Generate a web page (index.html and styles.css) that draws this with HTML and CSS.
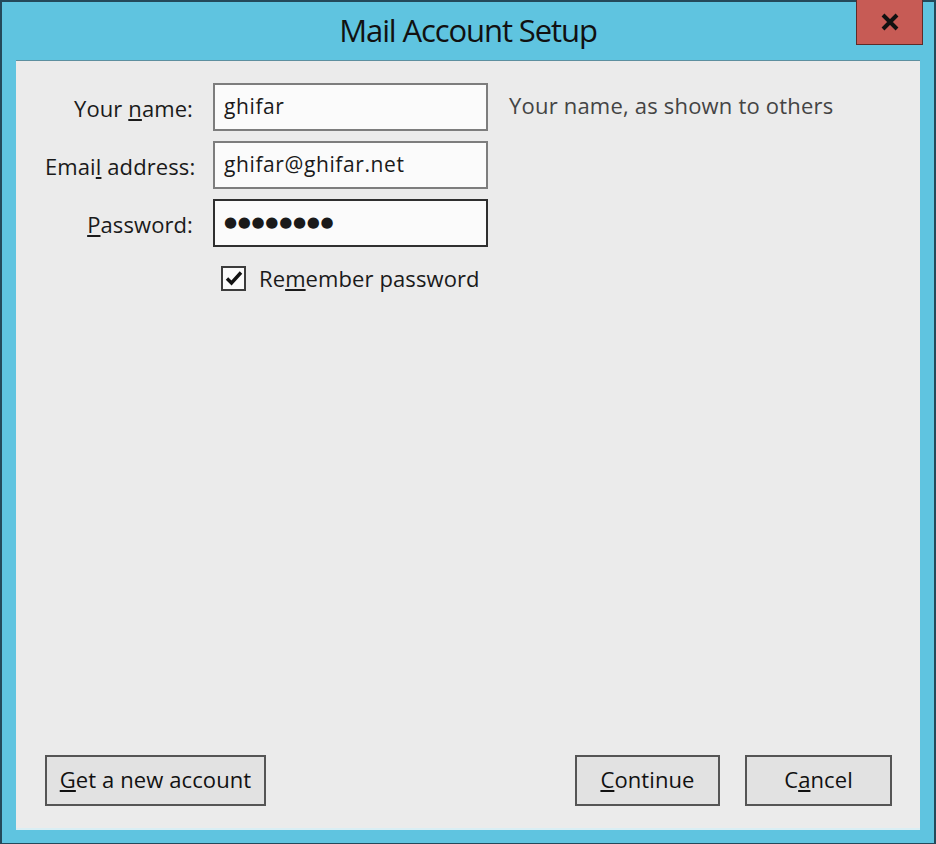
FILE: index.html
```html
<!DOCTYPE html>
<html>
<head>
<meta charset="utf-8">
<link rel="stylesheet" href="styles.css">
</head>
<body>
<div class="window">
  <div class="titlebar">
    <div class="title">Mail Account Setup</div>
    <div class="close">
      <svg width="20" height="18" viewBox="0 0 20 18"><path d="M3 2 L17 16 M17 2 L3 16" stroke="#111" stroke-width="4" stroke-linecap="butt"/></svg>
    </div>
  </div>
  <div class="panel">
    <div class="form">
      <label class="lbl">Your <u>n</u>ame:</label>
      <div class="input">ghifar</div>
      <div class="hint">Your name, as shown to others</div>

      <label class="lbl">Emai<u>l</u> address:</label>
      <div class="input">ghifar@ghifar.net</div>
      <div></div>

      <label class="lbl"><u>P</u>assword:</label>
      <div class="input focused"><span class="dots">●●●●●●●●</span></div>
      <div></div>

      <div></div>
      <div class="remember">
        <span class="check">
          <svg width="18" height="16" viewBox="0 0 18 16"><path d="M2 8.5 L6.5 13 L16 2.5" fill="none" stroke="#111" stroke-width="3.4"/></svg>
        </span>
        <span>Re<u>m</u>ember password</span>
      </div>
      <div></div>
    </div>
    <div class="buttons">
      <button class="btn wide"><u>G</u>et a new account</button>
      <div class="spacer"></div>
      <button class="btn cont"><u>C</u>ontinue</button>
      <button class="btn cancel">C<u>a</u>ncel</button>
    </div>
  </div>
</div>
</body>
</html>
```

FILE: styles.css
```css
* { box-sizing: border-box; }
html, body { margin: 0; padding: 0; }
body {
  width: 936px;
  height: 844px;
  font-family: "Open Sans", "Noto Sans", sans-serif;
  color: #1a1a1a;
}
.window {
  position: relative;
  width: 936px;
  height: 844px;
  background: #5fc4e0;
  border: 2px solid #24495a;
  border-bottom-width: 1px;
  display: flex;
  flex-direction: column;
}
.titlebar {
  height: 58px;
  display: flex;
  align-items: center;
  justify-content: center;
  padding-bottom: 2px;
}
.title {
  font-size: 31px;
  letter-spacing: -1.1px;
  color: #111;
  font-stretch: 88%;
}
.close {
  position: absolute;
  top: -2px;
  right: 11px;
  width: 67px;
  height: 45px;
  background: #c75b55;
  border: 1px solid #5e2b28;
  border-top: none;
  display: flex;
  align-items: center;
  justify-content: center;
}
.panel {
  flex: 1;
  margin: 0 14px 13px 14px;
  background: #ebebeb;
  border-top: 1px solid #5d8f9f;
  border-bottom: 2px solid #d9eef4;
  display: flex;
  flex-direction: column;
  justify-content: space-between;
  padding: 22px 28px 22px 29px;
}
.form {
  display: grid;
  grid-template-columns: 148px 275px auto;
  grid-auto-rows: 48px;
  column-gap: 20px;
  row-gap: 10px;
  margin-left: -29px;
  padding-left: 29px;
}
.lbl {
  font-size: 22px;
  text-align: right;
  align-self: center;
  white-space: nowrap;
  margin-top: 2px;
  letter-spacing: 0.1px;
}
.input {
  background: #fbfbfb;
  border: 2px solid #7d7d7d;
  font-size: 21px;
  padding: 0 0 0 9px;
  display: flex;
  align-items: center;
  letter-spacing: 0.6px;
  padding-bottom: 2px;
}
.input.focused { border-color: #2f2f2f; padding-bottom: 2px; }
.dots { font-size: 15px; letter-spacing: 0.7px; font-family: "DejaVu Sans", sans-serif; }
.hint {
  font-size: 22px;
  color: #444;
  padding-left: 1px;
  margin-top: 7px;
  white-space: nowrap;
  letter-spacing: 0.2px;
}
.remember {
  grid-column: 2 / 4;
  display: flex;
  align-items: center;
  font-size: 22px;
  margin-top: 1px;
  margin-left: 8px;
  height: 40px;
  white-space: nowrap;
  letter-spacing: 0.1px;
}
.check {
  width: 25px;
  height: 25px;
  border: 2px solid #3c3c3c;
  background: #fafafa;
  margin-right: 13px;
  display: flex;
  align-items: center;
  justify-content: center;
}
.buttons {
  display: flex;
  align-items: center;
  gap: 25px;
}
.spacer { flex: 1; }
.btn {
  height: 51px;
  width: 145px;
  background: #e2e2e2;
  border: 2px solid #555;
  font-family: "Open Sans", "Noto Sans", sans-serif;
  font-size: 22px;
  color: #111;
  letter-spacing: 0.1px;
  padding: 0 0 4px 0;
}
.btn.wide { width: 221px; }
.btn.cont { width: 145px; }
.btn.cancel { width: 147px; }
```
